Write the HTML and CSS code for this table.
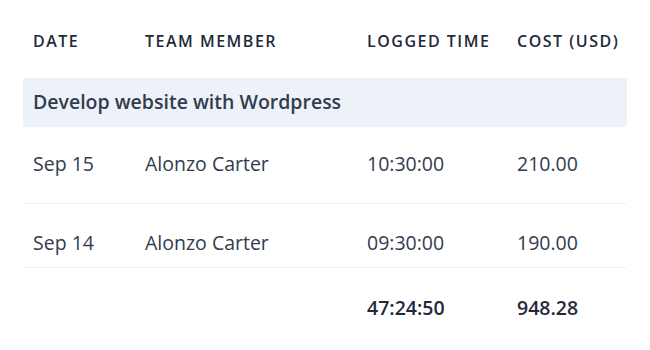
FILE: index.html
```html
<!DOCTYPE html>
<html lang="en">
<head>
    <meta charset="UTF-8">
    <meta name="viewport" content="width=device-width, initial-scale=1.0">
    <title>Time Log</title>
    <link rel="stylesheet" href="styles.css">
</head>
<body>

    <!-- Logged time per task -->
    <div class="log-wrap">
        <table class="log-table">
            <thead>
                <tr>
                    <th class="col-date">Date</th>
                    <th class="col-member">Team Member</th>
                    <th class="col-time">Logged Time</th>
                    <th class="col-cost">Cost (USD)</th>
                </tr>
            </thead>
            <tbody>
                <tr class="task-row">
                    <td colspan="4">Develop website with Wordpress</td>
                </tr>
                <tr class="entry first">
                    <td>Sep 15</td>
                    <td>Alonzo Carter</td>
                    <td>10:30:00</td>
                    <td>210.00</td>
                </tr>
                <tr class="entry second">
                    <td>Sep 14</td>
                    <td>Alonzo Carter</td>
                    <td>09:30:00</td>
                    <td>190.00</td>
                </tr>
                <tr class="total-row">
                    <td></td>
                    <td></td>
                    <td>47:24:50</td>
                    <td>948.28</td>
                </tr>
            </tbody>
        </table>
    </div>

</body>
</html>
```

FILE: styles.css
```css
body {
    margin: 0;
    padding: 0;
    background-color: #ffffff;
    font-family: "Open Sans", "Noto Sans", Arial, sans-serif;
    color: #323c4e;
}
.log-wrap {
    padding: 11px 23px;
}
.log-table {
    width: 604px;
    border-collapse: collapse;
    table-layout: fixed;
    text-align: left;
}
.log-table th, .log-table td {
    box-sizing: border-box;
}
.col-date { width: 112px; }
.col-member { width: 222px; }
.col-time { width: 150px; }
.col-cost { width: 120px; }
/* Header */
.log-table th {
    padding: 20px 10px 27px;
    font-size: 16px;
    line-height: 20px;
    font-weight: 600;
    letter-spacing: 1.5px;
    text-transform: uppercase;
    color: #1f2a3b;
    white-space: nowrap;
}
.log-table td {
    padding: 0 10px;
    font-size: 19.5px;
    line-height: 26px;
    white-space: nowrap;
}
/* Task group */
.task-row td {
    background-color: #edf2f8;
    font-weight: 600;
    padding-top: 11px;
    padding-bottom: 12px;
}
.entry td {
    border-bottom: 1px solid #eff1f4;
}
.entry.first td {
    padding-top: 24px;
    padding-bottom: 26px;
}
.entry.second td {
    padding-top: 26px;
    padding-bottom: 11px;
}
/* Totals */
.total-row td {
    padding-top: 27px;
    font-weight: 600;
    color: #1f2a3b;
}
```
